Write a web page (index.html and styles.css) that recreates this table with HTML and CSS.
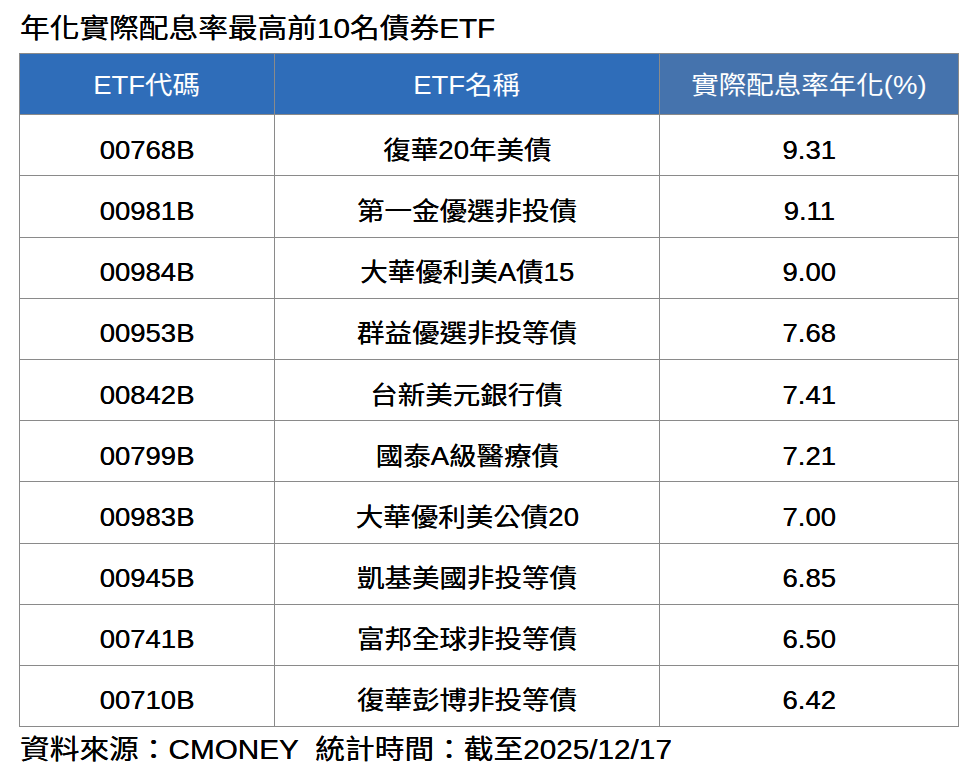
FILE: index.html
```html
<!DOCTYPE html>
<html lang="zh-Hant">
<head>
<meta charset="utf-8">
<title>年化實際配息率最高前10名債券ETF</title>
<link rel="stylesheet" href="styles.css">
</head>
<body>
<div class="page">
  <div class="title"><span class="wide wide-left">年化實際配息率最高前10名債券ETF</span></div>
  <table class="etf">
    <colgroup>
      <col class="c-code">
      <col class="c-name">
      <col class="c-rate">
    </colgroup>
    <thead>
      <tr>
        <th class="h-main"><span class="wide">ETF代碼</span></th>
        <th class="h-main"><span class="wide">ETF名稱</span></th>
        <th class="h-alt"><span class="wide">實際配息率年化(%)</span></th>
      </tr>
    </thead>
    <tbody>
      <tr><td><span class="wide">00768B</span></td><td><span class="wide">復華20年美債</span></td><td><span class="wide">9.31</span></td></tr>
      <tr><td><span class="wide">00981B</span></td><td><span class="wide">第一金優選非投債</span></td><td><span class="wide">9.11</span></td></tr>
      <tr><td><span class="wide">00984B</span></td><td><span class="wide">大華優利美A債15</span></td><td><span class="wide">9.00</span></td></tr>
      <tr><td><span class="wide">00953B</span></td><td><span class="wide">群益優選非投等債</span></td><td><span class="wide">7.68</span></td></tr>
      <tr><td><span class="wide">00842B</span></td><td><span class="wide">台新美元銀行債</span></td><td><span class="wide">7.41</span></td></tr>
      <tr><td><span class="wide">00799B</span></td><td><span class="wide">國泰A級醫療債</span></td><td><span class="wide">7.21</span></td></tr>
      <tr><td><span class="wide">00983B</span></td><td><span class="wide">大華優利美公債20</span></td><td><span class="wide">7.00</span></td></tr>
      <tr><td><span class="wide">00945B</span></td><td><span class="wide">凱基美國非投等債</span></td><td><span class="wide">6.85</span></td></tr>
      <tr><td><span class="wide">00741B</span></td><td><span class="wide">富邦全球非投等債</span></td><td><span class="wide">6.50</span></td></tr>
      <tr><td><span class="wide">00710B</span></td><td><span class="wide">復華彭博非投等債</span></td><td><span class="wide">6.42</span></td></tr>
    </tbody>
  </table>
  <div class="source"><span class="wide wide-left">資料來源：CMONEY&nbsp;&nbsp;統計時間：截至2025/12/17</span></div>
</div>
</body>
</html>
```

FILE: styles.css
```css
html, body {
  margin: 0;
  padding: 0;
  background: #ffffff;
}

body {
  font-family: "Liberation Sans", "Noto Sans CJK TC", sans-serif;
  color: #000000;
}

.page {
  width: 978px;
  height: 780px;
  padding-left: 19px;
  box-sizing: border-box;
}

.wide {
  display: inline-block;
  transform: scaleX(1.1);
  transform-origin: center center;
  white-space: nowrap;
}

.wide-left {
  transform-origin: left center;
}

.title {
  height: 53px;
  padding-left: 1px;
  font-size: 27px;
  line-height: 58px;
  overflow: visible;
  text-shadow: 0 0 0.3px #000000;
}

.etf {
  border-collapse: collapse;
  table-layout: fixed;
  width: 939px;
  border: 1px solid #8a8a8a;
}

.c-code { width: 255px; }
.c-name { width: 385px; }
.c-rate { width: 299px; }

.etf th,
.etf td {
  border: 1px solid #8a8a8a;
  height: 61.2px;
  padding: 0;
  text-align: center;
  vertical-align: middle;
  font-size: 25px;
  line-height: 1;
  box-sizing: border-box;
}

.etf td {
  padding-top: 10px;
  text-shadow: 0 0 0.3px #000000;
}

.etf th {
  font-weight: normal;
  color: #ffffff;
  padding-top: 3px;
}

.h-main { background: #2f6db9; }
.h-alt { background: #4573ad; }

.source {
  padding-left: 1px;
  font-size: 27px;
  line-height: 46px;
  text-shadow: 0 0 0.3px #000000;
}
```
